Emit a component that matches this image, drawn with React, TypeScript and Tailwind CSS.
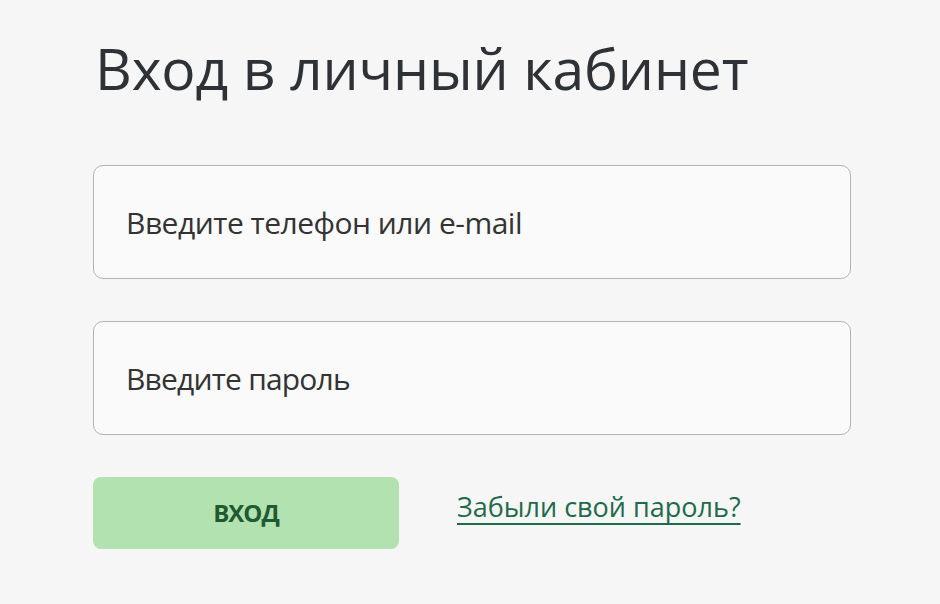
export default function App() {
  return (
    <div className="w-[940px] h-[604px] bg-[#f6f6f6] font-['Open_Sans',sans-serif] overflow-hidden">
      <div className="pl-[93px] pr-[89px] pt-[30px] flex flex-col">
        <h1 className="text-[57px] leading-[76px] text-[#2e3236] pl-[2px] tracking-[-0.15px]">Вход в личный кабинет</h1>
        <div className="mt-[59px] flex flex-col gap-[42px]">
          <div className="h-[114px] rounded-[10px] border border-[#b4b4b4] bg-[#fafafa] flex items-center pl-[32px]">
            <span className="text-[30px] text-[#333] tracking-[-0.5px]">Введите телефон или e-mail</span>
          </div>
          <div className="h-[114px] rounded-[10px] border border-[#b4b4b4] bg-[#fafafa] flex items-center pl-[32px]">
            <span className="text-[30px] text-[#333] tracking-[-0.8px]">Введите пароль</span>
          </div>
        </div>
        <div className="mt-[42px] flex items-center">
          <button className="w-[306px] h-[72px] rounded-[8px] bg-[#b2e2b0] text-[#1f5a33] text-[24px] font-bold tracking-[-1px]">ВХОД</button>
          <a href="#" className="ml-[58px] mb-[12px] text-[27px] text-[#1f6a4c] underline underline-offset-[6px] decoration-[1.5px] [text-decoration-skip-ink:none]">Забыли свой пароль?</a>
        </div>
      </div>
    </div>
  );
}
